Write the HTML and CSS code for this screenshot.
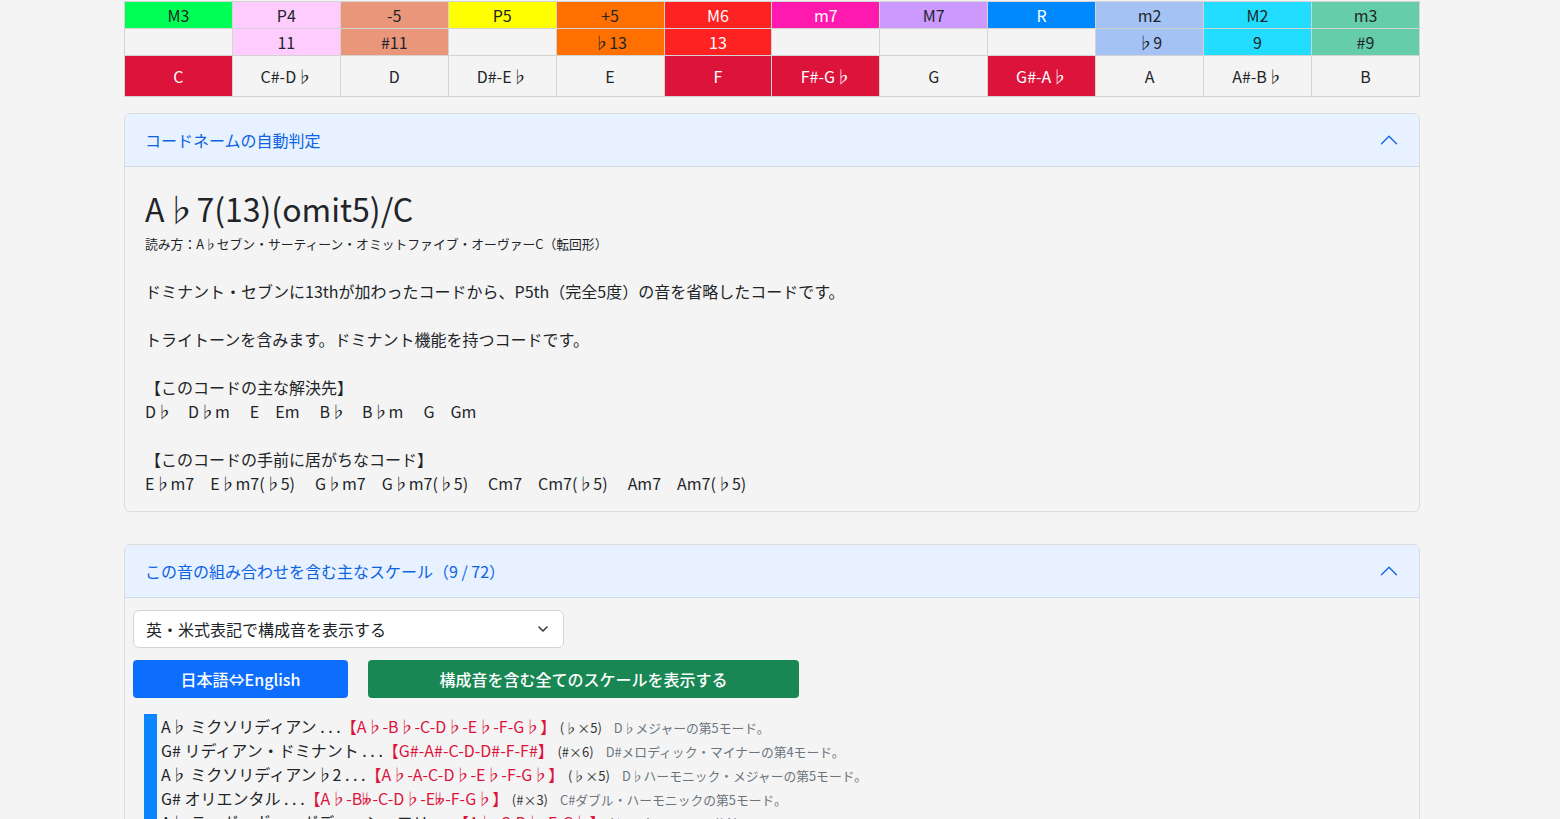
FILE: index.html
```html
<!DOCTYPE html>
<html lang="ja">
<head>
<meta charset="utf-8">
<title>コードネームの自動判定</title>
<link rel="stylesheet" href="styles.css">
</head>
<body>
<div class="page">
  <table class="notes">
    <tr class="deg">
      <td class="c-m3">M3</td><td class="c-p4">P4</td><td class="c-d5">-5</td><td class="c-p5">P5</td>
      <td class="c-a5">+5</td><td class="c-m6 w">M6</td><td class="c-m7 w">m7</td><td class="c-mj7">M7</td>
      <td class="c-r w">R</td><td class="c-mi2">m2</td><td class="c-mj2">M2</td><td class="c-mi3">m3</td>
    </tr>
    <tr class="ten">
      <td></td><td class="c-p4">11</td><td class="c-d5">#11</td><td></td>
      <td class="c-a5">♭13</td><td class="c-m6 w">13</td><td></td><td></td>
      <td></td><td class="c-mi2">♭9</td><td class="c-mj2">9</td><td class="c-mi3">#9</td>
    </tr>
    <tr class="pc">
      <td class="on">C</td><td>C#-D♭</td><td>D</td><td>D#-E♭</td>
      <td>E</td><td class="on">F</td><td class="on">F#-G♭</td><td>G</td>
      <td class="on">G#-A♭</td><td>A</td><td>A#-B♭</td><td>B</td>
    </tr>
  </table>

  <section class="card">
    <div class="card-head">
      <span>コードネームの自動判定</span>
      <svg class="chev" viewBox="0 0 16 16" width="20" height="20"><path fill="currentColor" fill-rule="evenodd" d="M1.646 4.646a.5.5 0 0 1 .708 0L8 10.293l5.646-5.647a.5.5 0 0 1 .708.708l-6 6a.5.5 0 0 1-.708 0l-6-6a.5.5 0 0 1 0-.708z"/></svg>
    </div>
    <div class="card-body chord-body">
      <h2 class="chord-name">A♭7(13)(omit5)/C</h2>
      <p class="reading">読み方：A♭セブン・サーティーン・オミットファイブ・オーヴァーC（転回形）</p>
      <div class="desc">
        <p>ドミナント・セブンに13thが加わったコードから、P5th（完全5度）の音を省略したコードです。</p>
        <p>トライトーンを含みます。ドミナント機能を持つコードです。</p>
        <p>【このコードの主な解決先】<br><span class="ch">D♭</span><span class="ch x">D♭m</span><span class="ch">E</span><span class="ch x">Em</span><span class="ch">B♭</span><span class="ch x">B♭m</span><span class="ch">G</span><span class="ch">Gm</span></p>
        <p>【このコードの手前に居がちなコード】<br><span class="ch">E♭m7</span><span class="ch x">E♭m7(♭5)</span><span class="ch">G♭m7</span><span class="ch x">G♭m7(♭5)</span><span class="ch">Cm7</span><span class="ch x">Cm7(♭5)</span><span class="ch">Am7</span><span class="ch">Am7(♭5)</span></p>
      </div>
    </div>
  </section>

  <section class="card card-scales">
    <div class="card-head">
      <span>この音の組み合わせを含む主なスケール（9 / 72）</span>
      <svg class="chev" viewBox="0 0 16 16" width="20" height="20"><path fill="currentColor" fill-rule="evenodd" d="M1.646 4.646a.5.5 0 0 1 .708 0L8 10.293l5.646-5.647a.5.5 0 0 1 .708.708l-6 6a.5.5 0 0 1-.708 0l-6-6a.5.5 0 0 1 0-.708z"/></svg>
    </div>
    <div class="card-body scale-body">
      <div class="select">
        <span>英・米式表記で構成音を表示する</span>
        <svg viewBox="0 0 16 16" width="16" height="16"><path fill="none" stroke="#343a40" stroke-linecap="round" stroke-linejoin="round" stroke-width="1.6" d="M4 6l4 4 4-4"/></svg>
      </div>
      <div class="btns">
        <button class="btn btn-blue">日本語⇔English</button>
        <button class="btn btn-green">構成音を含む全てのスケールを表示する</button>
      </div>
      <div class="scales">
        <div class="scale"><span class="nm">A♭ ミクソリディアン . . .</span><span class="red">【A♭-B♭-C-D♭-E♭-F-G♭】</span> <span class="acc">(♭×5)</span><span class="mode">D♭メジャーの第5モード。</span></div>
        <div class="scale"><span class="nm">G# リディアン・ドミナント . . .</span><span class="red">【G#-A#-C-D-D#-F-F#】</span> <span class="acc">(#×6)</span><span class="mode">D#メロディック・マイナーの第4モード。</span></div>
        <div class="scale"><span class="nm">A♭ ミクソリディアン♭2 . . .</span><span class="red">【A♭-A-C-D♭-E♭-F-G♭】</span> <span class="acc">(♭×5)</span><span class="mode">D♭ハーモニック・メジャーの第5モード。</span></div>
        <div class="scale"><span class="nm">G# オリエンタル . . .</span><span class="red">【A♭-B𝄫-C-D♭-E𝄫-F-G♭】</span> <span class="acc">(#×3)</span><span class="mode">C#ダブル・ハーモニックの第5モード。</span></div>
        <div class="scale"><span class="nm">A♭ ラーガ・ヴァーガディーシュワリ . . .</span><span class="red">【A♭-C-D♭-F-G♭】</span> <span class="acc">(♭×3)</span><span class="mode">インドの旋法のひとつ。</span></div>
      </div>
    </div>
  </section>
</div>
</body>
</html>
```

FILE: styles.css
```css
html {
  overflow: hidden;
}

body {
  margin: 0;
  padding: 0 16px 0 0;
  background: #f4f4f4;
  color: #212529;
  font-family: "Noto Sans CJK JP", "Noto Sans", "DejaVu Sans", sans-serif;
  font-size: 16px;
  line-height: 1.5;
}

.page {
  width: 1296px;
  margin: 0 auto;
  padding-top: 1px;
}

/* ---------- interval table ---------- */
.notes {
  width: 100%;
  border-collapse: collapse;
  table-layout: fixed;
  text-align: center;
}

.notes td {
  border: 1px solid #d3d3d3;
  padding: 1px 0;
  line-height: 24px;
  height: 24px;
  background: #f4f4f4;
  color: #212529;
}

.notes .pc td {
  padding: 8px 0;
}

.notes td.w { color: #fff; }

.notes td.c-m3 { background: #00ff55; }
.notes td.c-p4 { background: #ffccff; }
.notes td.c-d5 { background: #e9967a; }
.notes td.c-p5 { background: #ffff00; }
.notes td.c-a5 { background: #ff7000; }
.notes td.c-m6 { background: #ff2222; }
.notes td.c-m7 { background: #ff1aaf; }
.notes td.c-mj7 { background: #cc99ff; }
.notes td.c-r { background: #0088ff; }
.notes td.c-mi2 { background: #a4c2f4; }
.notes td.c-mj2 { background: #22ddff; }
.notes td.c-mi3 { background: #66cdaa; }

.notes td.on {
  background: #dc143c;
  color: #fff;
}

/* ---------- cards ---------- */
.card {
  margin-top: 16px;
  border: 1px solid #dcdcdc;
  border-radius: 6px;
  overflow: hidden;
}

.card-scales {
  margin-top: 32px;
}

.card-head {
  display: flex;
  align-items: center;
  justify-content: space-between;
  padding: 14px 20px;
  line-height: 24px;
  background: #e7f1ff;
  color: #0c63e4;
  border-bottom: 1px solid #cfd9e6;
}

.chev {
  display: block;
  transform: rotate(180deg);
  color: #0c63e4;
}

.chord-body {
  padding: 16px 20px 16px;
}

.chord-name {
  margin: 0;
  font-size: 32px;
  line-height: 51px;
  font-weight: 400;
}

.reading {
  margin: 0 0 25px;
  font-size: 12.8px;
  line-height: 20px;
}

.desc p {
  margin: 0 0 24px;
  line-height: 24px;
}

.desc p:last-child {
  margin-bottom: 0;
}

.ch {
  margin-right: 16px;
}

.ch.x {
  margin-right: 20px;
}

/* ---------- scales ---------- */
.scale-body {
  padding: 12px 8px 0;
}

.select {
  display: flex;
  align-items: center;
  justify-content: space-between;
  box-sizing: border-box;
  width: 431px;
  height: 38px;
  padding: 0 12px;
  background: #fff;
  border: 1px solid #ced4da;
  border-radius: 6px;
}

.btns {
  display: flex;
  gap: 20px;
  margin-top: 12px;
}

.btn {
  height: 38px;
  border: 0;
  border-radius: 4px;
  color: #fff;
  font-family: inherit;
  font-size: 16px;
  font-weight: 500;
  line-height: 24px;
  padding: 0;
}

.btn-blue {
  width: 215px;
  background: #0d6efd;
}

.btn-green {
  width: 431px;
  background: #198754;
}

.scales {
  margin: 16px 0 0 11px;
  border-left: 13px solid #0a84ff;
  padding-left: 4px;
}

.scale {
  height: 24px;
  line-height: 24px;
  white-space: nowrap;
}

.scale span {
  line-height: 1;
}

.red {
  color: #dc143c;
}

.acc {
  font-size: 13px;
  color: #333;
}

.mode {
  margin-left: 12px;
  font-size: 12.8px;
  color: #6c757d;
}
```
